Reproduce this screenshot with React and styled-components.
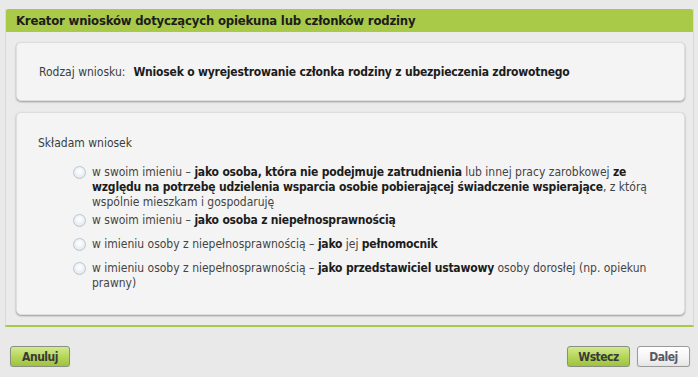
import React from 'react';
import styled, { createGlobalStyle } from 'styled-components';

const GlobalStyle = createGlobalStyle`
  html, body {
    margin: 0;
    padding: 0;
    background: #e9e9e9;
  }
  body {
    font-family: "DejaVu Sans Condensed", "DejaVu Sans", sans-serif;
    font-size: 12px;
    color: #444;
  }
`;

const Page = styled.div`
  padding: 9px 4px 0 5px;
`;

const Panel = styled.div`
  background: #ebebeb;
  border-left: 1px solid #d9d9d9;
  border-right: 1px solid #d9d9d9;
  border-bottom: 2px solid #a8c84a;
`;

const Header = styled.div`
  height: 23px;
  display: flex;
  align-items: center;
  padding-left: 10px;
  background: #a9c948;
  border-radius: 2px 2px 0 0;
  font-weight: bold;
  font-size: 13px;
  letter-spacing: -0.2px;
  color: #1c1c1c;
`;

const Body = styled.div`
  display: flex;
  flex-direction: column;
  gap: 11px;
  padding: 10px 8px 10px 10px;
`;

const Card = styled.div`
  background: #f4f4f4;
  border: 1px solid #dedede;
  border-radius: 5px;
  box-shadow: 0 1px 2px rgba(0, 0, 0, 0.35);
`;

const TypeCard = styled(Card)`
  height: 57px;
  display: flex;
  align-items: center;
  gap: 8px;
  padding-left: 22px;
`;

const TypeLabel = styled.span`
  color: #3c3c3c;
`;

const TypeValue = styled.span`
  font-weight: bold;
  letter-spacing: -0.2px;
  color: #1c1c1c;
`;

const ChoiceCard = styled(Card)`
  padding: 23px 21px 23px 21px;
`;

const Lead = styled.div`
  line-height: 15px;
  color: #3c3c3c;
  margin-bottom: 14px;
`;

const Options = styled.div`
  display: flex;
  flex-direction: column;
  gap: 3px;
  padding-left: 35px;
`;

const Option = styled.label`
  display: flex;
  align-items: flex-start;
  gap: 6px;
  min-height: 21px;
  line-height: 15px;
`;

const Radio = styled.span`
  flex: none;
  width: 11px;
  height: 11px;
  margin-top: 1px;
  border-radius: 50%;
  border: 1px solid #bac5cf;
  background: radial-gradient(circle at 50% 40%, #ffffff 0%, #f0f3f6 45%, #dbe1e7 100%);
`;

const OptionText = styled.span`
  color: #444;
  b {
    color: #1c1c1c;
    letter-spacing: -0.2px;
  }
`;

const Footer = styled.div`
  display: flex;
  justify-content: space-between;
  align-items: center;
  padding: 19px 4px 0 5px;
`;

const ButtonGroup = styled.div`
  display: flex;
  gap: 7px;
`;

const Button = styled.button`
  width: ${(p) => p.$w}px;
  height: 21px;
  padding: 0;
  border: 1px solid ${(p) => (p.$green ? '#8a8f80' : '#9a9a9a')};
  border-radius: 3px;
  background: ${(p) =>
    p.$green
      ? 'linear-gradient(to bottom, #d3ea8e 0%, #b6d65c 50%, #9fc33c 100%)'
      : 'linear-gradient(to bottom, #ffffff 0%, #f3f3f3 60%, #e4e4e4 100%)'};
  box-shadow: 0 1px 1px rgba(0, 0, 0, 0.15);
  font-family: "DejaVu Sans Condensed", sans-serif;
  font-weight: bold;
  font-size: 12px;
  letter-spacing: -0.5px;
  color: ${(p) => (p.$green ? '#3a3a3a' : '#555a66')};
  cursor: pointer;
`;

const options = [
  <>
    w swoim imieniu – <b>jako osoba, która nie podejmuje zatrudnienia</b> lub innej pracy zarobkowej{' '}
    <b>ze względu na potrzebę udzielenia wsparcia osobie pobierającej świadczenie wspierające</b>, z którą
    wspólnie mieszkam i gospodaruję
  </>,
  <>
    w swoim imieniu – <b>jako osoba z niepełnosprawnością</b>
  </>,
  <>
    w imieniu osoby z niepełnosprawnością – <b>jako</b> jej <b>pełnomocnik</b>
  </>,
  <>
    w imieniu osoby z niepełnosprawnością – <b>jako przedstawiciel ustawowy</b> osoby dorosłej (np. opiekun
    prawny)
  </>,
];

export default function App() {
  return (
    <>
      <GlobalStyle />
      <Page>
        <Panel>
          <Header>Kreator wniosków dotyczących opiekuna lub członków rodziny</Header>
          <Body>
            <TypeCard>
              <TypeLabel>Rodzaj wniosku:</TypeLabel>
              <TypeValue>Wniosek o wyrejestrowanie członka rodziny z ubezpieczenia zdrowotnego</TypeValue>
            </TypeCard>
            <ChoiceCard>
              <Lead>Składam wniosek</Lead>
              <Options>
                {options.map((text, i) => (
                  <Option key={i}>
                    <Radio />
                    <OptionText>{text}</OptionText>
                  </Option>
                ))}
              </Options>
            </ChoiceCard>
          </Body>
        </Panel>
        <Footer>
          <Button $green $w={60}>Anuluj</Button>
          <ButtonGroup>
            <Button $green $w={63}>Wstecz</Button>
            <Button $w={53}>Dalej</Button>
          </ButtonGroup>
        </Footer>
      </Page>
    </>
  );
}
